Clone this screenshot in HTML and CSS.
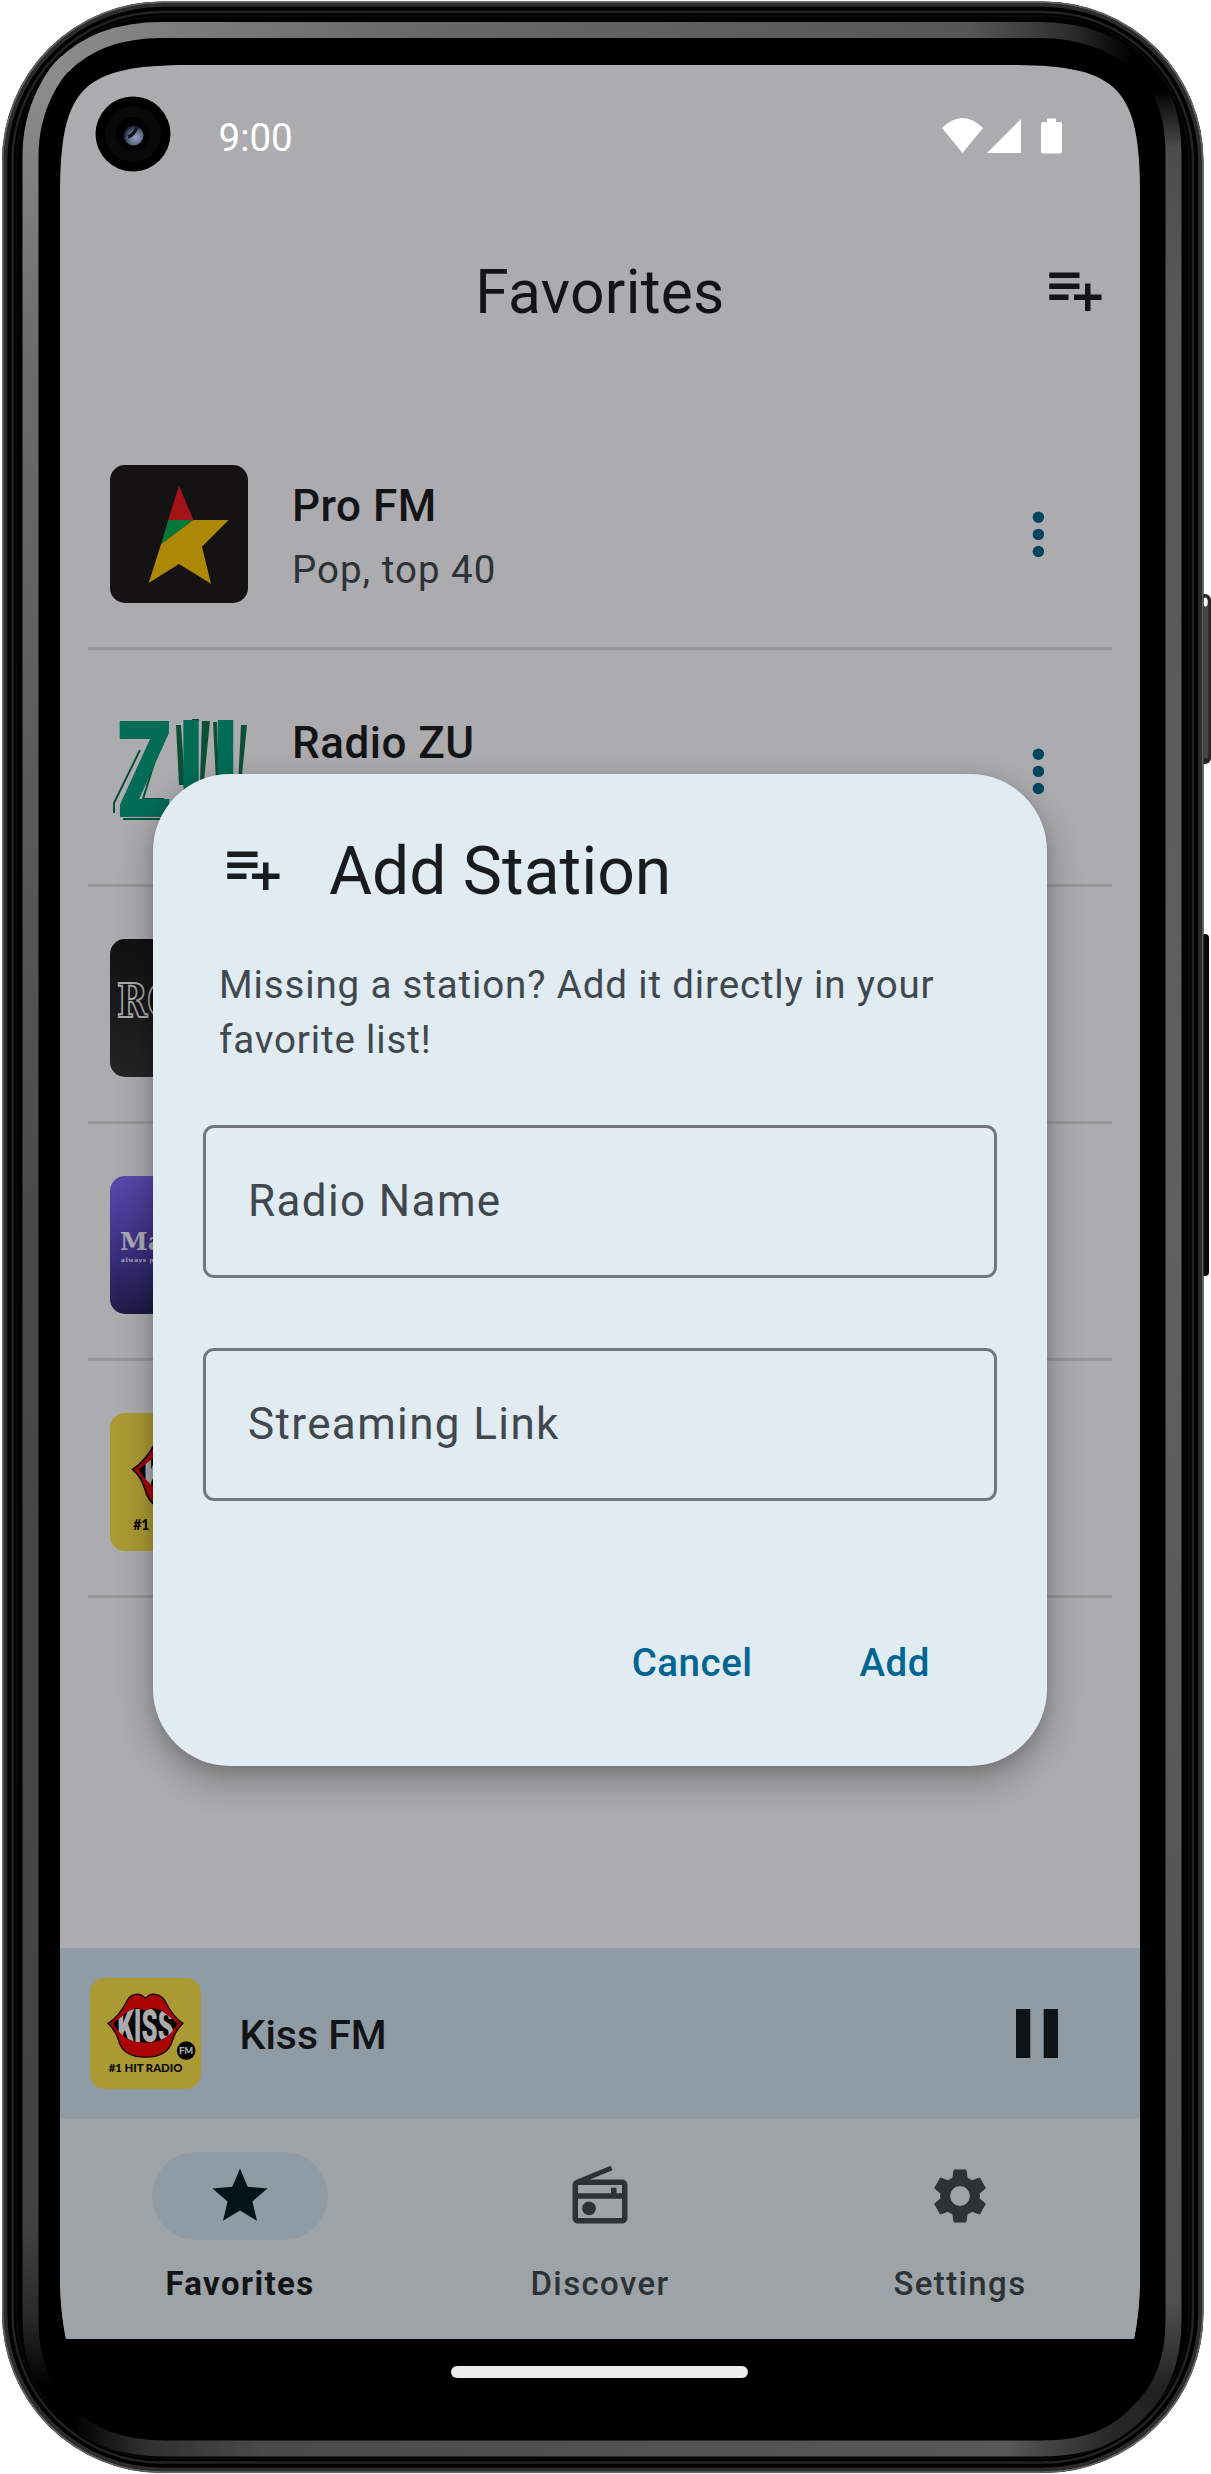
FILE: index.html
```html
<!DOCTYPE html>
<html lang="en">
<head>
<meta charset="utf-8">
<title>Favorites</title>
<link rel="stylesheet" href="styles.css">
</head>
<body>
<svg class="defs" width="0" height="0" aria-hidden="true">
  <defs>
    <symbol id="playlist-add" viewBox="0 0 24 24"><path d="M14 10H3v2h11v-2zm0-4H3v2h11V6zm4 8v-4h-2v4h-4v2h4v4h2v-4h4v-2h-4zM3 16h7v-2H3v2z"/></symbol>
    <symbol id="more" viewBox="0 0 24 24"><circle cx="12" cy="6" r="2"/><circle cx="12" cy="12" r="2"/><circle cx="12" cy="18" r="2"/></symbol>
    <clipPath id="mouth"><path d="M23 45C32 38 39 31 46 30C50 29.500 52 32 55 32C58 32 60 29.500 64 30C71 31 78 38 87 45C80 58 70 64 55 64C40 64 30 58 23 45Z"/></clipPath>
    <symbol id="kiss" viewBox="0 0 110 110">
      <rect width="110" height="110" fill="#ab9a33"/>
      <path d="M18 45C26 40 33 30 37 22C40 17 44 16 47 16C51 16 53 18 55 20C57 18 59 16 63 16C67 16 70 17 74 22C78 30 84 40 92 45C86 50 84 55 82 61C79 73 70 78.500 55 78.500C40 78.500 31 73 28 61C26 55 24 50 18 45Z" fill="#ab0404" stroke="#0c0000" stroke-width="1.300"/>
      <path d="M23 45C32 38 39 31 46 30C50 29.500 52 32 55 32C58 32 60 29.500 64 30C71 31 78 38 87 45C80 58 70 64 55 64C40 64 30 58 23 45Z" fill="#050505"/>
      <g clip-path="url(#mouth)"><text class="kiss-word" x="0" y="0" transform="translate(27 63.500) scale(1 1.720)" font-size="27" textLength="56" lengthAdjust="spacingAndGlyphs">KISS</text></g>
      <circle cx="95.300" cy="72" r="9.200" fill="#050505"/>
      <text class="kiss-fm" x="95.300" y="75.500" text-anchor="middle" font-size="10" textLength="14" lengthAdjust="spacingAndGlyphs">FM</text>
      <text class="kiss-tag" x="18.500" y="93.500" font-size="12" textLength="73" lengthAdjust="spacingAndGlyphs">#1 HIT RADIO</text>
    </symbol>
  </defs>
</svg>

<div class="phone">
  <svg class="frame" viewBox="0 0 1211 2474" aria-hidden="true">
    <defs>
      <linearGradient id="leftG" gradientUnits="userSpaceOnUse" x1="0" y1="0" x2="0" y2="2474">
        <stop offset="0" stop-color="#8e8e8e"/><stop offset=".04" stop-color="#8a8a8a"/><stop offset=".14" stop-color="#6c6c6c"/><stop offset=".5" stop-color="#494949"/><stop offset=".9" stop-color="#424242"/><stop offset=".935" stop-color="#2a2a2a"/><stop offset=".965" stop-color="#000"/>
      </linearGradient>
      <linearGradient id="topG" gradientUnits="userSpaceOnUse" x1="0" y1="0" x2="1211" y2="0">
        <stop offset=".04" stop-color="#8c8c8c"/><stop offset=".15" stop-color="#7c7c7c"/><stop offset=".35" stop-color="#686868"/><stop offset=".8" stop-color="#565656"/><stop offset=".88" stop-color="#303030"/><stop offset=".935" stop-color="#000"/>
      </linearGradient>
      <linearGradient id="rightG" gradientUnits="userSpaceOnUse" x1="0" y1="0" x2="0" y2="2474">
        <stop offset=".036" stop-color="#000"/><stop offset=".06" stop-color="#4c4c4c"/><stop offset=".12" stop-color="#585858"/><stop offset=".5" stop-color="#606060"/><stop offset=".93" stop-color="#505050"/><stop offset=".965" stop-color="#222"/>
      </linearGradient>
      <linearGradient id="bottomG" gradientUnits="userSpaceOnUse" x1="0" y1="0" x2="1211" y2="0">
        <stop offset=".06" stop-color="#000"/><stop offset=".12" stop-color="#303030"/><stop offset=".22" stop-color="#4a4a4a"/><stop offset=".83" stop-color="#585858"/><stop offset=".92" stop-color="#262626"/>
      </linearGradient>
      <radialGradient id="lens" cx=".6" cy=".6" r=".6"><stop offset="0" stop-color="#93a4c5"/><stop offset=".6" stop-color="#5d6b88"/><stop offset="1" stop-color="#151a26"/></radialGradient>
    </defs>
    <rect x="1198" y="594" width="13" height="170" rx="6" fill="#252625"/>
    <rect x="1203.500" y="600" width="5" height="158" rx="2" fill="#444544"/>
    <ellipse cx="1205.500" cy="602" rx="2.200" ry="4.500" fill="#fff"/>
    <rect x="1198" y="934" width="11" height="342" rx="4" fill="#090909"/>
    <rect x="2" y="1.500" width="1201.500" height="2471.500" rx="160" fill="#000"/>
    <g fill="none">
      <rect x="3" y="2.500" width="1199.500" height="2469.500" rx="159" stroke="#60625f" stroke-width="2"/>
      <rect x="5.500" y="5" width="1194.500" height="2464.500" rx="157" stroke="#2b2c2c" stroke-width="3.500"/>
      <rect x="12.500" y="12" width="1180.500" height="2450.500" rx="149" stroke="#222" stroke-width="2.500"/>
      <rect x="16.500" y="16" width="1172.500" height="2442.500" rx="145" stroke="#090909" stroke-width="2"/>
      <g stroke-width="16">
        <path d="M66 2412C43 2388 30.500 2362 30.500 2320V156C30.500 104 57 70 67 62" stroke="url(#leftG)"/>
        <path d="M62 67C86 42 120 30 162 30H1040C1080 30 1120 44 1140 66" stroke="url(#topG)"/>
        <path d="M1140 66C1165 90 1173.500 115 1173.500 156V2320C1173.500 2365 1158 2394 1138 2412" stroke="url(#rightG)"/>
        <path d="M1142 2408C1118 2435 1090 2448.500 1040 2448.500H166C125 2448.500 90 2438 66 2412" stroke="url(#bottomG)"/>
      </g>
    </g>
  </svg>

  <main class="screen">
    <div class="status">
      <svg class="camera" viewBox="0 0 76 76"><circle cx="38" cy="38" r="37.500" fill="#000"/><circle cx="38" cy="38" r="28" fill="#090909"/><circle cx="38" cy="38" r="17" fill="#020202"/><circle cx="38.500" cy="39.500" r="10" fill="url(#lens)"/><path d="M33 41Q39 39 42 31" fill="none" stroke="#11141d" stroke-width="3.500"/></svg>
      <span class="clock">9:00</span>
      <svg class="signals" viewBox="0 0 121 37"><path d="M0 10Q20.500-10 41 10L20.500 35Z"/><path d="M45 35L79 1V35Z"/><path d="M99 6q0-2 2-2h4V1q0-.500.500-.500h8q.500 0 .500.500v3h4q2 0 2 2v27.500q0 2-2 2h-17q-2 0-2-2z"/></svg>
    </div>
    <header class="bar">
      <h1>Favorites</h1>
      <svg class="icon bar-icon"><use href="#playlist-add"/></svg>
    </header>

    <ul class="stations">
      <li>
        <svg class="art" viewBox="0 0 138 138"><rect width="138" height="138" fill="#141213"/><path d="M69 20.700L83.500 55H58.200Z" fill="#a31418"/><path d="M58.200 55H83.500L51 79.500Z" fill="#057a38"/><path d="M83.300 55H118.700L92 81.700L101 118.700L69 99L38.700 118L51 79.300Z" fill="#ac8806"/></svg>
        <div class="info"><b>Pro FM</b><span>Pop, top 40</span></div>
        <svg class="more"><use href="#more"/></svg>
      </li>
      <li>
        <svg class="art" viewBox="0 0 138 138">
          <g fill="#0c4f37"><path d="M66 23h5l4 60h-6zM92 19h8l-6 60h-4zM103 20h4l2 60h-3zM131 23h6l-6 60h-3zM82 17h7v2h-7zM114 18h8v2h-8zM13 116h45v2H13z"/></g>
          <path d="M30 48L4 101V111M46 55L33 97H54" fill="none" stroke="#0c4f37" stroke-width="2"/>
          <text class="zu" transform="translate(0 115) scale(.66 1)" x="10.500 104" font-size="135">ZU</text>
        </svg>
        <div class="info"><b>Radio ZU</b></div>
        <svg class="more"><use href="#more"/></svg>
      </li>
      <li>
        <svg class="art" viewBox="0 0 138 138">
          <defs><linearGradient id="rock" x2="0" y2="1"><stop stop-color="#111"/><stop offset="1" stop-color="#242424"/></linearGradient></defs>
          <rect width="138" height="138" fill="url(#rock)"/>
          <text class="rock" x="7" y="78" font-size="46" textLength="62" lengthAdjust="spacingAndGlyphs">RO</text>
        </svg>
      </li>
      <li>
        <svg class="art" viewBox="0 0 138 138">
          <defs><linearGradient id="magic" x2=".15" y2="1"><stop stop-color="#5a49ae"/><stop offset=".55" stop-color="#3b2f80"/><stop offset="1" stop-color="#1d1b44"/></linearGradient></defs>
          <rect width="138" height="138" fill="url(#magic)"/>
          <text class="magic" x="10" y="74" font-size="25">Ma</text>
          <text class="magic" x="11" y="86" font-size="6" letter-spacing=".600">always p</text>
        </svg>
      </li>
      <li><svg class="art"><use href="#kiss"/></svg></li>
    </ul>

    <section class="player">
      <svg class="cover"><use href="#kiss"/></svg>
      <b>Kiss FM</b>
      <svg class="pause" viewBox="0 0 42 49"><path d="M0 0h14.300v49H0zM27.700 0H42v49H27.700z"/></svg>
    </section>

    <nav class="tabs">
      <a class="tab active"><span class="pill"><svg class="icon" viewBox="0 0 24 24"><path d="M12 17.270L18.180 21l-1.640-7.030L22 9.240l-7.190-.610L12 2 9.190 8.630 2 9.240l5.460 4.730L5.820 21z"/></svg></span>Favorites</a>
      <a class="tab"><span class="pill"><svg class="icon" viewBox="0 0 24 24"><path fill-rule="evenodd" d="M20 6H8.300l8.260-3.340L15.880 1 3.240 6.150C2.510 6.430 2 7.170 2 8v12c0 1.100.890 2 2 2h16c1.110 0 2-.900 2-2V8c0-1.110-.890-2-2-2zm0 2v3h-2V9h-2v2H4V8h16zM4 20v-7h16v7H4z"/><circle cx="8" cy="16.480" r="2.500"/></svg></span>Discover</a>
      <a class="tab"><span class="pill"><svg class="icon" viewBox="0 0 24 24"><path fill-rule="evenodd" d="M19.140 12.940c.040-.300.060-.610.060-.940 0-.320-.020-.640-.070-.940l2.030-1.580c.180-.140.230-.410.120-.610l-1.920-3.320c-.120-.220-.370-.290-.590-.220l-2.390.960c-.500-.380-1.030-.700-1.620-.940L14.400 2.810c-.040-.240-.240-.410-.480-.410h-3.840c-.240 0-.430.170-.470.410L9.250 5.350C8.660 5.590 8.120 5.920 7.630 6.290L5.240 5.330c-.220-.080-.470 0-.590.220L2.740 8.870c-.120.210-.080.470.120.610l2.030 1.580C4.840 11.360 4.800 11.690 4.800 12s.020.640.070.940l-2.030 1.580c-.180.140-.230.410-.120.610l1.920 3.320c.120.220.370.290.590.220l2.390-.960c.500.380 1.030.700 1.620.940l.360 2.540c.050.240.240.410.480.410h3.840c.240 0 .440-.170.470-.410l.360-2.540c.590-.240 1.130-.560 1.620-.940l2.390.960c.220.080.470 0 .590-.220l1.920-3.320c.120-.220.070-.470-.120-.610l-2.010-1.580zM12 15.600A3.600 3.600 0 1 1 12 8.400A3.600 3.600 0 0 1 12 15.600z"/></svg></span>Settings</a>
    </nav>

    <section class="dialog" role="dialog">
      <div class="dialog-head"><svg class="icon"><use href="#playlist-add"/></svg><h2>Add Station</h2></div>
      <p>Missing a station? Add it directly in your favorite list!</p>
      <div class="field">Radio Name</div>
      <div class="field">Streaming Link</div>
      <div class="actions"><button>Cancel</button><button>Add</button></div>
    </section>
  </main>
  <div class="home"></div>
</div>
</body>
</html>
```
FILE: styles.css
```css
* { box-sizing: border-box; }
body { margin: 0; background: #fff; font-family: Roboto, sans-serif; }
h1, h2, p, ul { margin: 0; padding: 0; font-weight: 400; }
svg { display: block; flex: none; fill: currentColor; }
.defs { position: absolute; }

.phone { position: relative; width: 1211px; height: 2474px; padding: 65px 71px 0 60px; overflow: hidden; }
.frame { position: absolute; inset: 0; width: 1211px; height: 2474px; }

.screen {
  position: relative;
  display: flex;
  flex-direction: column;
  width: 1080px;
  height: 2274px;
  background: #acacae;
  color: #131416;
  clip-path: path("M0 130C0 22 22 0 130 0H950C1058 0 1080 22 1080 130V2210Q1080 2245 1074 2274H6Q0 2245 0 2210Z");
}
.icon { width: 66px; height: 66px; }

.status { display: flex; align-items: center; height: 138px; padding: 0 77px 0 34.500px; color: #fff; }
.camera { width: 76px; height: 76px; }
.clock { flex: 1; margin-left: 48px; font-size: 38.500px; line-height: 46px; }
.status .clock { padding-top: 7px; }
.signals { width: 121px; height: 37px; margin-top: 4px; }

.bar { display: grid; grid-template-columns: 1fr auto 1fr; align-items: center; height: 181px; padding: 0 33px; }
.bar h1 { grid-column: 2; margin-bottom: 3px; font-size: 60.500px; line-height: 77px; letter-spacing: .3px; }
.bar-icon { justify-self: end; margin-bottom: 10px; }

.stations { flex: 1; padding: 29px 28px 0; list-style: none; }
.stations li { display: flex; align-items: flex-start; height: 237px; padding: 52px 39px 0 22px; border-bottom: 3px solid #979798; }
.art { width: 138px; height: 138px; border-radius: 15px; }
.info { flex: 1; display: flex; flex-direction: column; gap: 3px; padding: 8px 0 0 44px; }
.info b { font-size: 44px; line-height: 66px; font-weight: 500; letter-spacing: .5px; }
.info span { font-size: 38.500px; line-height: 55px; letter-spacing: 1px; color: #2c3235; }
.more { width: 68.750px; height: 68.750px; margin-top: 35px; color: #004560; }

.zu { font-family: Roboto, sans-serif; font-weight: 900; fill: #026c57; }
.rock { font-family: "DejaVu Serif", serif; font-weight: 700; fill: #151313; stroke: #aaa; stroke-width: 2px; }
.magic { font-family: "DejaVu Serif", serif; font-weight: 700; fill: #aaaab0; }
.kiss-word { font-family: Roboto, sans-serif; font-weight: 900; fill: #acacac; }
.kiss-fm { font-family: Lato, sans-serif; font-weight: 900; fill: #acacac; }
.kiss-tag { font-family: Lato, sans-serif; font-weight: 900; fill: #090800; }

.player { display: flex; align-items: center; height: 171px; padding: 0 82px 0 30px; background: #8f9ca5; }
.cover { width: 111px; height: 111px; border-radius: 15px; }
.player b { flex: 1; margin-left: 38.500px; padding-top: 2px; font-size: 41px; line-height: 60px; font-weight: 500; }
.pause { width: 42px; height: 49px; color: #111416; }

.tabs { display: flex; height: 220px; padding-top: 33px; background: #9ea3a7; }
.tab { flex: 1; display: flex; flex-direction: column; align-items: center; gap: 22px; font-size: 33px; line-height: 44px; font-weight: 500; letter-spacing: 1.375px; color: #2c3235; }
.pill { display: flex; align-items: center; justify-content: center; width: 176px; height: 88px; border-radius: 44px; }
.active { font-weight: 700; color: #131416; }
.active .pill { background: #8f9ca5; color: #04141b; }

.dialog {
  position: absolute;
  left: 93px;
  top: 709px;
  width: 894px;
  height: 992px;
  padding: 54px 50px 0;
  border-radius: 77px;
  background: #e1ebf2;
  color: #191c1e;
  box-shadow: 0 14px 36px rgba(0, 0, 0, .3), 0 3px 12px rgba(0, 0, 0, .1);
}
.dialog-head { display: flex; align-items: flex-start; gap: 44px; padding-left: 16px; }
.dialog-head .icon { margin-top: 6.500px; }
.dialog-head h2 { font-size: 66px; line-height: 88px; }
.dialog p { margin: 41px 0 58px 16px; font-size: 38.500px; line-height: 55px; letter-spacing: .86px; color: #40484d; }
.field { height: 153px; margin-bottom: 70px; padding: 0 42px; border: 3px solid #70787e; border-radius: 11px; font-size: 44px; line-height: 147px; letter-spacing: 1.375px; color: #40484d; }
.actions { display: flex; justify-content: flex-end; gap: 107px; padding: 64px 67px 0 0; }
.actions button { padding: 0; border: 0; background: none; font: 500 38.500px/55px Roboto, sans-serif; letter-spacing: .5px; color: #006590; }

.home { position: relative; width: 297px; height: 12px; margin: 27px 0 0 391px; border-radius: 6px; background: #ececec; }
```
